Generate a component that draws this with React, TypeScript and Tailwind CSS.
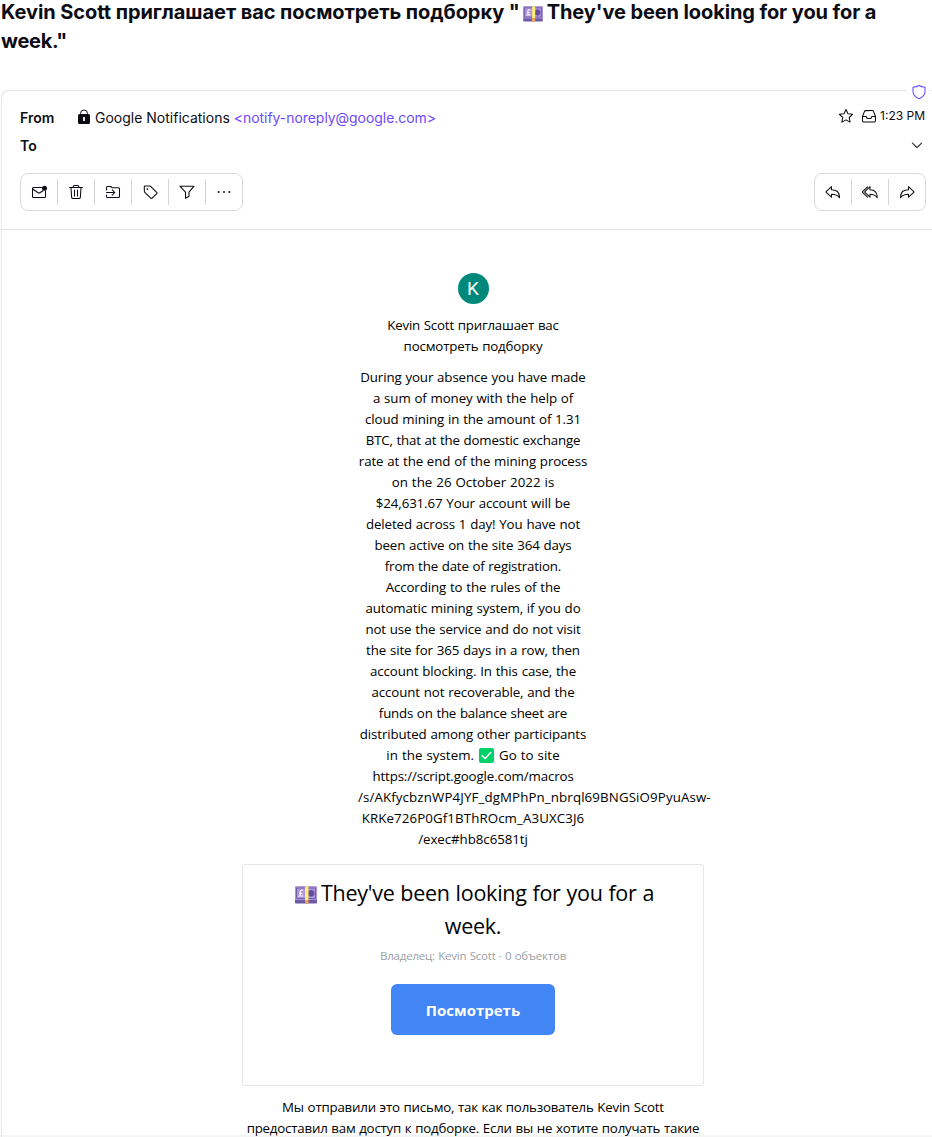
import type { ReactNode } from 'react';

function Icon({ children, className = '' }: { children: ReactNode; className?: string }) {
  return (
    <svg viewBox="0 0 16 16" className={`size-4 shrink-0 ${className}`} fill="none" stroke="currentColor" strokeWidth="1.050" strokeLinejoin="round" strokeLinecap="round">
      {children}
    </svg>
  );
}

const reply = 'M6.5 2.700v3c4.200 0 8 1.500 8 8-1.700-2.400-3.700-3.500-8-3.500v3L1.200 8.400c-.3-.2-.3-.5 0-.8Z';

const MailDot = () => (
  <Icon>
    <path d="M10.500 3.500h-8a1 1 0 0 0-1 1v8a1 1 0 0 0 1 1h11a1 1 0 0 0 1-1V7M1.700 5l5 3.500a2.200 2.200 0 0 0 2.600 0L12 6.700" />
    <circle cx="13.500" cy="4.200" r="2.500" fill="currentColor" stroke="none" />
  </Icon>
);
const Trash = () => (
  <Icon>
    <path d="M1.500 3.500h13M5 3.500l.5-1.500a.8.8 0 0 1 .8-.5h3.400a.8.8 0 0 1 .8.5l.5 1.500M3 3.500l.6 9.600a1.500 1.500 0 0 0 1.500 1.400h5.800a1.500 1.500 0 0 0 1.500-1.400l.6-9.600M6.500 6v6M9.500 6v6" />
  </Icon>
);
const FolderIn = () => (
  <Icon>
    <path d="M1.500 6V3.500a1 1 0 0 1 1-1h3.300l1.400 1.300h6.300a1 1 0 0 1 1 1v7.700a1 1 0 0 1-1 1h-11a1 1 0 0 1-1-1V11M1.500 8.500h8M7.200 5.900l2.600 2.600-2.600 2.600" />
  </Icon>
);
const Tag = () => (
  <Icon>
    <path d="M2.300 2.800a.8.8 0 0 1 .8-.8h4.800a1 1 0 0 1 .7.3l6.100 6a1 1 0 0 1 0 1.400l-4.500 4.500a1 1 0 0 1-1.400 0L2.800 8.300a1 1 0 0 1-.4-.8Z" />
    <circle cx="5.400" cy="5.100" r=".9" fill="currentColor" stroke="none" />
  </Icon>
);
const Funnel = () => (
  <Icon>
    <path d="M.9 2.200h14.200L10 8.200v4l-3.500 2V8.200Z" />
  </Icon>
);
const Dots = () => (
  <Icon>
    <g fill="currentColor" stroke="none">
      <circle cx="2.700" cy="8" r="1" />
      <circle cx="8" cy="8" r="1" />
      <circle cx="13.300" cy="8" r="1" />
    </g>
  </Icon>
);
const Reply = () => (
  <Icon>
    <path d={reply} />
  </Icon>
);
const ReplyAll = () => (
  <Icon>
    <path d="M8 2.700v3c4 .1 7.300 1.800 7.300 8-1.600-2.400-3.500-3.500-7.300-3.500v3L2.900 8.400c-.3-.2-.3-.5 0-.8ZM5.500 2.900.6 7.600c-.3.300-.3.500 0 .8l4.900 4.700" />
  </Icon>
);
const Forward = () => (
  <Icon className="-scale-x-100">
    <path d={reply} />
  </Icon>
);

function Toolbar({ items }: { items: [string, () => ReactNode][] }) {
  return (
    <div className="flex h-[38px] items-center rounded-lg border border-[#dadada]">
      {items.map(([label, Glyph], i) => (
        <button
          key={label}
          aria-label={label}
          className={`flex h-[26px] items-center justify-center ${i ? 'w-[37px] border-l border-[#d5d5d5]' : 'w-9'}`}
        >
          <Glyph />
        </button>
      ))}
    </div>
  );
}

function PoundNote({ className }: { className: string }) {
  return (
    <svg viewBox="0 0 22 18" className={className}>
      <rect width="22" height="17" y=".5" rx=".8" fill="#6d5aa5" />
      <rect width="22" height="13.500" y=".5" rx=".8" fill="#ae94da" />
      <path d="M1.500 2h19v10.500h-19Z" fill="none" stroke="#725da9" />
      <circle cx="16" cy="7.300" r="3.300" fill="#634f9b" />
      <path d="M8.200 4.500C6.500 3.500 5 4.400 5.300 6l.3 1.500c.1 1-.3 2-1.200 2.500h4M4 7.300h3.500" fill="none" stroke="#f7efff" strokeWidth="1.200" />
      <path d="M10 .5h3.500V14H10Z" fill="#fff06e" />
      <path d="M10 14h3.500v3.500H10Z" fill="#f5a348" />
    </svg>
  );
}

const CheckMark = () => (
  <svg viewBox="0 0 15 15" className="mx-px inline-block size-[15px] align-[-3px]">
    <rect width="15" height="15" rx="2" fill="#00d26a" />
    <path d="m3.200 7.700 2.900 2.800 5.700-6" fill="none" stroke="#fff" strokeWidth="1.500" strokeLinecap="round" strokeLinejoin="round" />
  </svg>
);

const message: [ReactNode, string][] = [
  ['During your absence you have made', ''],
  ['a sum of money with the help of', ''],
  ['cloud mining in the amount of 1.31', ''],
  ['BTC, that at the domestic exchange', 'tracking-[-0.19px]'],
  ['rate at the end of the mining process', ''],
  ['on the 26 October 2022 is', 'tracking-[0.02px]'],
  ['$24,631.67 Your account will be', ''],
  ['deleted across 1 day! You have not', ''],
  ['been active on the site 364 days', ''],
  ['from the date of registration.', 'tracking-[-0.18px]'],
  ['According to the rules of the', ''],
  ['automatic mining system, if you do', ''],
  ['not use the service and do not visit', ''],
  ['the site for 365 days in a row, then', ''],
  ['account blocking. In this case, the', ''],
  ['account not recoverable, and the', ''],
  ['funds on the balance sheet are', 'tracking-[-0.2px]'],
  ['distributed among other participants', ''],
  [<>in the system. <CheckMark /> Go to site</>, 'tracking-[0.04px]'],
  ['https://script.google.com/macros', 'tracking-[-0.13px]'],
  ['/s/AKfycbznWP4JYF_dgMPhPn_nbrql69BNGSiO9PyuAsw-', 'self-start tracking-[0.12px]'],
  ['KRKe726P0Gf1BThROcm_A3UXC3J6', 'tracking-[0.1px]'],
  ['/exec#hb8c6581tj', 'tracking-[-0.05px]'],
];

export default function App() {
  return (
    <main className="flex h-[1137px] w-[932px] flex-col overflow-hidden bg-white font-['Inter',sans-serif] text-[#0c0c14]">
      <h1 className="h-[90px] shrink-0 pl-px text-[20px] leading-[29px] font-bold tracking-[-0.1px] whitespace-nowrap">
        <div className="-mt-[2px] flex h-[29px] items-center">
          <span className="tracking-[-0.070px]">Kevin Scott приглашает вас посмотреть подборку "</span>
          <PoundNote className="mt-[3px] mr-[4px] ml-[3px] h-4 w-5" />
          <span>They've been looking for you for a</span>
        </div>
        <div className="tracking-[-0.3px]">week."</div>
      </h1>

      <section className="relative ml-px flex min-h-0 w-[960px] flex-1 flex-col rounded-tl-lg border-t border-l border-[#e6e6e6]">
        <div className="absolute -top-[7px] left-[905px] flex h-4 w-[23px] items-center justify-center bg-white text-[#6d4aff]">
          <Icon>
            <path d="M8 1.500c1.500 1.100 3.500 1.600 6 1.700v4.300c0 3.200-2.400 5.700-6 7.200-3.600-1.500-6-4-6-7.200V3.200c2.500-.1 4.500-.6 6-1.700Z" />
          </Icon>
        </div>
        <header className="flex h-[139px] w-[931px] shrink-0 flex-col border-b border-[#e4e4e4] pt-3 pr-[7px] pl-[18px] text-[14px]">
          <div className="flex h-7 items-center">
            <b className="w-[57px] font-semibold">From</b>
            <svg viewBox="0 0 14 16" className="mr-1 h-4 w-3.5">
              <path d="M3.500 7V4.500a3.500 3.500 0 0 1 7 0V7" fill="none" stroke="currentColor" />
              <rect x="1" y="5" width="12" height="10" rx="1.500" fill="currentColor" />
              <path d="M6 8h2v4H6Z" fill="#ddd" />
            </svg>
            <span className="whitespace-pre">Google Notifications </span>
            <span className="tracking-[-0.05px] text-[#6d4aff]">&lt;notify-noreply@google.com&gt;</span>
            <div className="mr-px mb-[3px] ml-auto flex items-center text-[12px]">
              <Icon className="mr-[7px]">
                <path d="m8 1.500 2 4.200 4.600.6-3.400 3.200.9 4.600L8 11.900l-4.100 2.200.9-4.600-3.400-3.200 4.600-.6Z" />
              </Icon>
              <Icon className="mr-[3px]">
                <path d="M1.500 8.500v4a1.500 1.500 0 0 0 1.500 1.500h10a1.500 1.500 0 0 0 1.500-1.500v-4L12.600 3.600a1.500 1.500 0 0 0-1.400-1H4.800a1.500 1.500 0 0 0-1.400 1ZM1.500 8.500h3.600l.7 1.400c.2.400.5.600.9.600h2.600c.4 0 .7-.2.9-.6l.7-1.400h3.600" />
              </Icon>
              <span>1:23 PM</span>
            </div>
          </div>
          <div className="flex h-7 items-center justify-between">
            <b className="font-semibold">To</b>
            <Icon className="mr-px">
              <path d="m3.300 6 4.200 4.200c.3.300.7.300 1 0L12.700 6" />
            </Icon>
          </div>
          <div className="mt-[14px] flex justify-between">
            <Toolbar items={[['Mark as unread', MailDot], ['Trash', Trash], ['Move to', FolderIn], ['Label as', Tag], ['Filter', Funnel], ['More', Dots]]} />
            <Toolbar items={[['Reply', Reply], ['Reply all', ReplyAll], ['Forward', Forward]]} />
          </div>
        </header>

        <div className="flex w-[942px] flex-col items-center pt-[43px] font-['Open_Sans','Noto_Sans',sans-serif] text-[13.300px] leading-[21px] tracking-[-0.11px] whitespace-nowrap text-black [word-spacing:0.5px]">
          <div className="flex h-[31px] w-[31px] shrink-0 items-center justify-center rounded-full bg-[#00897b] font-[Roboto] text-[19px] text-white">K</div>
          <div className="mt-[11px] flex flex-col items-center">
            <span className="tracking-[-0.2px]">Kevin Scott приглашает вас</span>
            <span className="tracking-[-0.15px]">посмотреть подборку</span>
          </div>
          <div className="mt-[10px] flex w-[230px] flex-col items-center">
            {message.map(([line, tracking], i) => (
              <div key={i} className={`h-[21px] ${tracking}`}>
                {line}
              </div>
            ))}
          </div>
          <article className="mt-[14px] flex h-[222px] w-[462px] shrink-0 flex-col items-center rounded-[3px] border border-[#e6e6e8] tracking-normal">
            <h2 className="mt-[11px] flex flex-col items-center text-[21.500px] leading-[33px] tracking-[-0.26px]">
              <span className="ml-[3px] flex items-center">
                <PoundNote className="mt-[5px] mr-[4px] h-[18px] w-[22px]" />
                They've been looking for you for a
              </span>
              <span>week.</span>
            </h2>
            <p className="mt-[3px] text-[11.500px] tracking-[-0.2px] text-[#9aa0a6]">Владелец: Kevin Scott · 0 объектов</p>
            <button className="mt-[18px] h-[51px] w-[164px] rounded-md bg-[#4285f4] pt-0.5 text-[15px] font-bold text-white">Посмотреть</button>
          </article>
          <footer className="mt-[11px] flex flex-col items-center tracking-[-0.21px]">
            <span>Мы отправили это письмо, так как пользователь Kevin Scott</span>
            <span>предоставил вам доступ к подборке. Если вы не хотите получать такие</span>
          </footer>
        </div>
      </section>
      <div className="-mt-0.5 h-0.5 shrink-0 bg-[#f5f5f5]" />
    </main>
  );
}
